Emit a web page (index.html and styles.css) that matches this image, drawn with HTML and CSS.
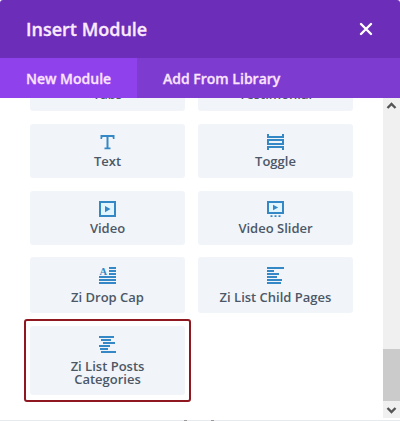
FILE: index.html
```html
<!DOCTYPE html>
<html lang="en">
<head>
<meta charset="utf-8">
<title>Insert Module</title>
<link rel="stylesheet" href="styles.css">
</head>
<body>
<div class="modal">
  <header class="header">
    <h1 class="title">Insert Module</h1>
    <svg class="close" width="14" height="14" viewBox="0 0 14 14"><path d="M2 2l10 10M12 2L2 12"/></svg>
  </header>
  <nav class="tabs">
    <span class="tab tab-active">New Module</span>
    <span class="tab">Add From Library</span>
  </nav>
  <div class="content">
    <div class="modules">
      <div class="row">
        <div class="card"><svg class="icon" viewBox="0 0 17 17"></svg><span>Tabs</span></div>
        <div class="card"><svg class="icon" viewBox="0 0 17 17"></svg><span>Testimonial</span></div>
      </div>
      <div class="row">
        <div class="card"><svg class="icon" viewBox="0 0 17 17"><path d="M1.500 1H15.500V5H14L13.500 3H9.500V13.500H11.500V15.200H5.500V13.500H7.500V3H3.500L3 5H1.500Z"/></svg><span>Text</span></div>
        <div class="card"><svg class="icon" viewBox="0 0 17 17"><path d="M0 0H2V2H15V0H17V4H0ZM0 5H17V11H0ZM2 7V9H15V7ZM0 12H17V16H15V14H2V16H0Z" fill-rule="evenodd"/></svg><span>Toggle</span></div>
      </div>
      <div class="row">
        <div class="card"><svg class="icon" viewBox="0 0 17 17"><path class="screen" d="M2 2h13v12H2z"/><path d="M0 0H17V16H0ZM2 2V14H15V2ZM6 5L11.500 8L6 11.200Z" fill-rule="evenodd"/></svg><span>Video</span></div>
        <div class="card"><svg class="icon" viewBox="0 0 17 17"><path class="screen" d="M2 2h13v9H2z"/><path d="M0 0H17V13H0ZM2 2V11H15V2ZM6 3.700L11.200 6.500L6 9.300ZM3.500 14.200H5.500V16H3.500ZM7.500 14.200H9.500V16H7.500ZM11.500 14.200H13.500V16H11.500Z" fill-rule="evenodd"/></svg><span>Video Slider</span></div>
      </div>
      <div class="row row-tall">
        <div class="card"><svg class="icon" viewBox="0 0 17 17"><path d="M10 0h7v2h-7zM10 3h7v2h-7zM10 6h7v2h-7zM0 9h17v2H0zM0 12h17v2H0zM0 15h17v2H0z"/><text class="cap" x="0.500" y="7.800">A</text></svg><span>Zi Drop Cap</span></div>
        <div class="card"><svg class="icon" viewBox="0 0 17 17"><path d="M0 0h17v2H0zM0 3h7v2H0zM0 6h12v2H0zM0 9h10v2H0zM0 12h15v2H0zM0 15h14v2H0z"/></svg><span>Zi List Child Pages</span></div>
      </div>
      <div class="row row-last">
        <div class="card card-marked"><svg class="icon" viewBox="0 0 17 17"><path d="M0 0h15v2H0zM2 3h10v2H2zM4 6h12v2H4zM0 9h11v2H0zM1 12h8v2H1zM2 15h15v2H2z"/></svg><span>Zi List Posts<br>Categories</span></div>
      </div>
    </div>
    <div class="scrollbar">
      <svg class="arrow" viewBox="0 0 17 17"><path d="M4.500 10L8.500 6L12.500 10"/></svg>
      <div class="thumb"></div>
      <svg class="arrow" viewBox="0 0 17 17"><path d="M4.500 7L8.500 11L12.500 7"/></svg>
    </div>
  </div>
  <div class="edge"><i></i><i></i></div>
</div>
</body>
</html>
```
FILE: styles.css
```css
* { box-sizing: border-box; }
body {
  margin: 0;
  font-family: "Open Sans", "Noto Sans", sans-serif;
  font-weight: 600;
  background: #fff;
}
.modal {
  height: 421px;
  display: flex;
  flex-direction: column;
  overflow: hidden;
  border-radius: 3px 3px 0 0;
}
.header {
  height: 58px;
  padding: 0 27px 0 26px;
  display: flex;
  align-items: center;
  justify-content: space-between;
  background: #6c2eb9;
}
.title {
  margin: 0;
  font-size: 18px;
  line-height: 24px;
  font-weight: 600;
  color: #fbeaff;
  -webkit-text-stroke: 0.3px #fbeaff;
}
.close { fill: none; stroke: #fff; stroke-width: 2.4; stroke-linecap: round; }
.tabs { height: 40px; display: flex; background: #7e3bd0; }
.tab {
  padding: 0 26px;
  font-size: 14px;
  line-height: 41px;
  color: #fbe4ff;
  -webkit-text-stroke: 0.3px #fbe4ff;
}
.tab-active { width: 137px; padding-right: 0; background: #8f42ec; }
.content {
  height: 320px;
  display: flex;
  justify-content: space-between;
  overflow: hidden;
}
.modules {
  width: 323px;
  margin: -41px 0 0 30px;
  display: flex;
  flex-direction: column;
  gap: 13px;
}
.row {
  height: 54px;
  flex: none;
  display: grid;
  grid-template-columns: 155px 155px;
  gap: 13px;
}
.row-tall { height: 56px; margin-top: -1px; }
.row-last { height: 69px; }
.card {
  position: relative;
  padding-top: 10px;
  display: flex;
  flex-direction: column;
  align-items: center;
  gap: 4px;
  border-radius: 3px;
  background: #f1f4f9;
  color: #4c5866;
  font-size: 13px;
  line-height: 13px;
  text-align: center;
}
.row-tall .card,
.row-last .card { gap: 7px; }
.card-marked::after {
  content: "";
  position: absolute;
  inset: -7px -6px;
  border: 2px solid #8f1720;
  border-radius: 3px;
}
.icon { width: 17px; height: 17px; flex: none; fill: #3488c5; }
.screen { fill: #e2f5ff; }
.cap { font: 700 10.500px "Liberation Serif", serif; }
.scrollbar {
  width: 17px;
  display: flex;
  flex-direction: column;
  background: #f0f0f0;
}
.arrow { width: 17px; height: 17px; fill: none; stroke: #555; stroke-width: 2.4; }
.thumb { height: 52px; margin-top: auto; background: #cbcbcb; }
.edge {
  height: 1px;
  margin-top: 2px;
  padding-left: 184px;
  display: flex;
  gap: 24px;
  background: #e6e9ee;
}
.edge i { width: 3px; background: #999; }
```
